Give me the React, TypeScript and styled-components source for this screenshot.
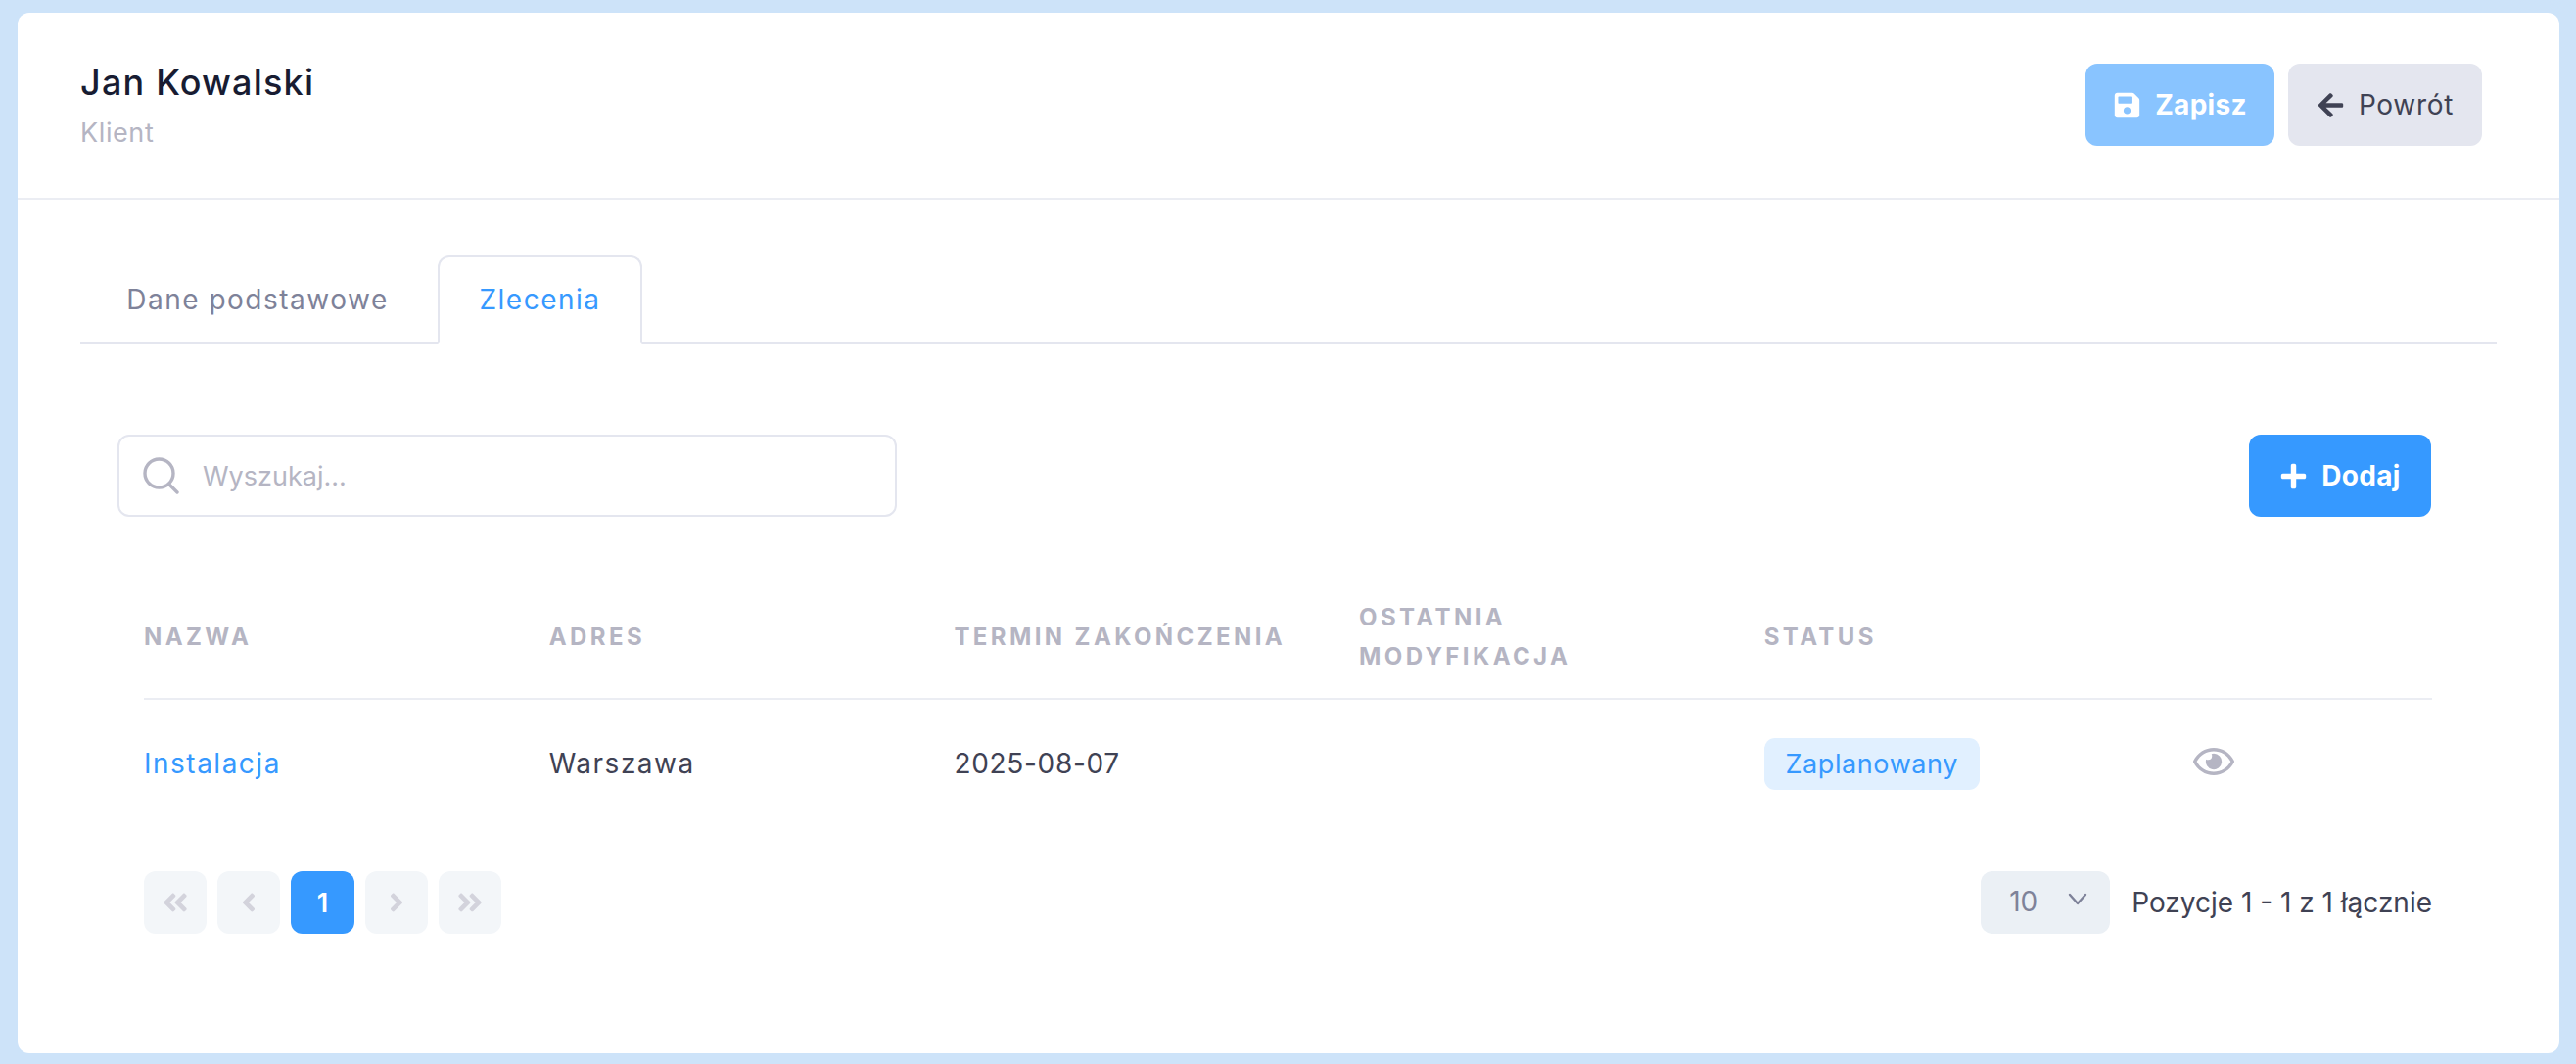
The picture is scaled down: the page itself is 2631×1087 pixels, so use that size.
import React from "react";
import styled, {createGlobalStyle} from "styled-components";
import {
  FaAngleDoubleLeft,
  FaAngleDoubleRight,
  FaAngleLeft,
  FaAngleRight,
  FaArrowLeft,
  FaPlus,
  FaRegEye,
  FaSave,
} from "react-icons/fa";

const GlobalStyle = createGlobalStyle`
  * {
    box-sizing: border-box;
  }
  html, body {
    margin: 0;
    background: #cde3f9;
  }
  body {
    font-family: Inter, "Noto Sans", "Liberation Sans", sans-serif;
    color: #3f4254;
  }
`;

const Page = styled.div`
  width: 2631px;
  height: 1087px;
  padding: 13px 17px 11px 18px;
`;

const Card = styled.div`
  height: 1063px;
  background: #fff;
  border-radius: 12px;
`;

const Header = styled.header`
  height: 191px;
  display: flex;
  justify-content: space-between;
  padding: 52px 79px 0 64px;
  border-bottom: 2px solid #ebedf3;
`;

const Title = styled.h1`
  margin: -1px 0 0;
  font-size: 36px;
  line-height: 40px;
  font-weight: 500;
  letter-spacing: 1.2px;
  color: #181c32;
`;

const Subtitle = styled.div`
  margin-top: 14px;
  font-size: 27px;
  line-height: 36px;
  letter-spacing: 0.6px;
  color: #b5b5c3;
`;

const Actions = styled.div`
  display: flex;
  gap: 14px;
`;

const Button = styled.button<{$variant: "save" | "back" | "add"}>`
  height: 84px;
  display: inline-flex;
  align-items: center;
  justify-content: center;
  gap: 14px;
  border: 0;
  border-radius: 12px;
  font-family: inherit;
  font-size: 28px;
  letter-spacing: ${(p) => (p.$variant === "back" ? "0.7px" : "0.3px")};
  font-weight: ${(p) => (p.$variant === "back" ? 400 : 700)};
  color: ${(p) => (p.$variant === "back" ? "#3f4254" : "#fff")};
  background: ${(p) =>
    p.$variant === "save"
      ? "#89c4ff"
      : p.$variant === "back"
      ? "#e4e6ef"
      : "#3699ff"};
  width: ${(p) =>
    p.$variant === "save" ? "193px" : p.$variant === "back" ? "198px" : "186px"};
  svg {
    font-size: 29px;
    flex: none;
  }
`;

const Body = styled.div`
  padding: 57px 64px 0 64px;
`;

const Tabs = styled.div`
  display: flex;
  height: 90px;
  border-bottom: 2px solid #e4e6ef;
`;

const Tab = styled.div<{$active?: boolean}>`
  height: 90px;
  display: flex;
  align-items: center;
  justify-content: center;
  font-size: 28px;
  letter-spacing: 1.5px;
  width: ${(p) => (p.$active ? "209px" : "365px")};
  padding-right: ${(p) => (p.$active ? "0" : "3px")};
  color: ${(p) => (p.$active ? "#3699ff" : "#7e8299")};
  ${(p) =>
    p.$active &&
    `
    background: #fff;
    border: 2px solid #e4e6ef;
    border-bottom-color: #fff;
    border-radius: 12px 12px 0 0;
  `}
`;

const Content = styled.div`
  padding: 93px 67px 0 38px;
`;

const Toolbar = styled.div`
  display: flex;
  justify-content: space-between;
  align-items: center;
`;

const Search = styled.div`
  width: 796px;
  height: 84px;
  display: flex;
  align-items: center;
  gap: 23px;
  padding-left: 24px;
  border: 2px solid #e4e6ef;
  border-radius: 12px;
  font-size: 27px;
  color: #b5b5c3;
`;

const TableWrap = styled.div`
  margin: 83px -1px 0 27px;
`;

const Row = styled.div<{$head?: boolean}>`
  display: grid;
  grid-template-columns: repeat(5, 413.7px) 1fr;
  align-items: center;
  ${(p) =>
    p.$head
      ? `
    height: 104px;
    padding-bottom: 22px;
    border-bottom: 2px solid #ebedf3;
  `
      : `
    height: 130px;
  `}
`;

const HeadCell = styled.div`
  font-size: 24px;
  line-height: 40px;
  font-weight: 700;
  letter-spacing: 3.4px;
  text-transform: uppercase;
  color: #b5b5c3;
`;

const Cell = styled.div<{$link?: boolean; $tight?: boolean}>`
  font-size: 28px;
  letter-spacing: ${(p) => (p.$tight ? "0.7px" : "1.5px")};
  color: ${(p) => (p.$link ? "#3699ff" : "#3f4254")};
`;

const Badge = styled.span`
  display: inline-flex;
  align-items: center;
  justify-content: center;
  width: 220px;
  height: 53px;
  border-radius: 11px;
  background: #e1f0ff;
  color: #3699ff;
  font-size: 27px;
  letter-spacing: 0.6px;
`;

const EyeCell = styled.div`
  padding-left: 25px;
  display: flex;
  font-size: 42px;
  color: #b5b5c3;
  transform: translateY(-2px);
`;

const Footer = styled.div`
  margin-top: 45px;
  display: flex;
  justify-content: space-between;
  align-items: center;
`;

const Pager = styled.div`
  display: flex;
  gap: 11px;
`;

const PageButton = styled.div<{$active?: boolean}>`
  width: ${(p) => (p.$active ? "65px" : "64px")};
  height: 64px;
  display: flex;
  align-items: center;
  justify-content: center;
  border-radius: 12px;
  font-size: ${(p) => (p.$active ? "27px" : "30px")};
  font-weight: 600;
  background: ${(p) => (p.$active ? "#3699ff" : "#f3f6f9")};
  color: ${(p) => (p.$active ? "#fff" : "#d3d3dc")};
`;

const PageSize = styled.div`
  display: flex;
  align-items: center;
  gap: 22px;
  font-size: 28px;
`;

const Select = styled.div`
  width: 132px;
  height: 64px;
  display: flex;
  align-items: center;
  justify-content: space-between;
  padding: 0 23px 2px 29px;
  border-radius: 12px;
  background: #ebf0f5;
  color: #7e8299;
  svg {
    margin-bottom: 5px;
  }
`;

const SearchIcon = () => (
  <svg width="38" height="38" viewBox="0 0 38 38" fill="none" stroke="#b5b5c3" strokeWidth="3.4" strokeLinecap="round">
    <circle cx="16.5" cy="16.5" r="14.5" />
    <line x1="27" y1="28" x2="35" y2="36" />
  </svg>
);

const Caret = () => (
  <svg width="20" height="13" viewBox="0 0 20 13" fill="none" stroke="#7e8299" strokeWidth="2.4" strokeLinecap="round" strokeLinejoin="round">
    <polyline points="2,2 10,11 18,2" />
  </svg>
);

const App = () => {
  return (
    <Page>
      <GlobalStyle />
      <Card>
        <Header>
          <div>
            <Title>Jan Kowalski</Title>
            <Subtitle>Klient</Subtitle>
          </div>
          <Actions>
            <Button $variant="save">
              <FaSave />
              Zapisz
            </Button>
            <Button $variant="back">
              <FaArrowLeft />
              Powrót
            </Button>
          </Actions>
        </Header>
        <Body>
          <Tabs>
            <Tab>Dane podstawowe</Tab>
            <Tab $active>Zlecenia</Tab>
          </Tabs>
          <Content>
            <Toolbar>
              <Search>
                <SearchIcon />
                Wyszukaj...
              </Search>
              <Button $variant="add">
                <FaPlus />
                Dodaj
              </Button>
            </Toolbar>
            <TableWrap>
              <Row $head>
                <HeadCell>Nazwa</HeadCell>
                <HeadCell>Adres</HeadCell>
                <HeadCell>Termin zakończenia</HeadCell>
                <HeadCell>
                  Ostatnia
                  <br />
                  modyfikacja
                </HeadCell>
                <HeadCell>Status</HeadCell>
                <div />
              </Row>
              <Row>
                <Cell $link>Instalacja</Cell>
                <Cell>Warszawa</Cell>
                <Cell $tight>2025-08-07</Cell>
                <Cell />
                <Cell>
                  <Badge>Zaplanowany</Badge>
                </Cell>
                <EyeCell>
                  <FaRegEye />
                </EyeCell>
              </Row>
              <Footer>
                <Pager>
                  <PageButton><FaAngleDoubleLeft /></PageButton>
                  <PageButton><FaAngleLeft /></PageButton>
                  <PageButton $active>1</PageButton>
                  <PageButton><FaAngleRight /></PageButton>
                  <PageButton><FaAngleDoubleRight /></PageButton>
                </Pager>
                <PageSize>
                  <Select>
                    10
                    <Caret />
                  </Select>
                  Pozycje 1 - 1 z 1 łącznie
                </PageSize>
              </Footer>
            </TableWrap>
          </Content>
        </Body>
      </Card>
    </Page>
  );
};

export default App;
